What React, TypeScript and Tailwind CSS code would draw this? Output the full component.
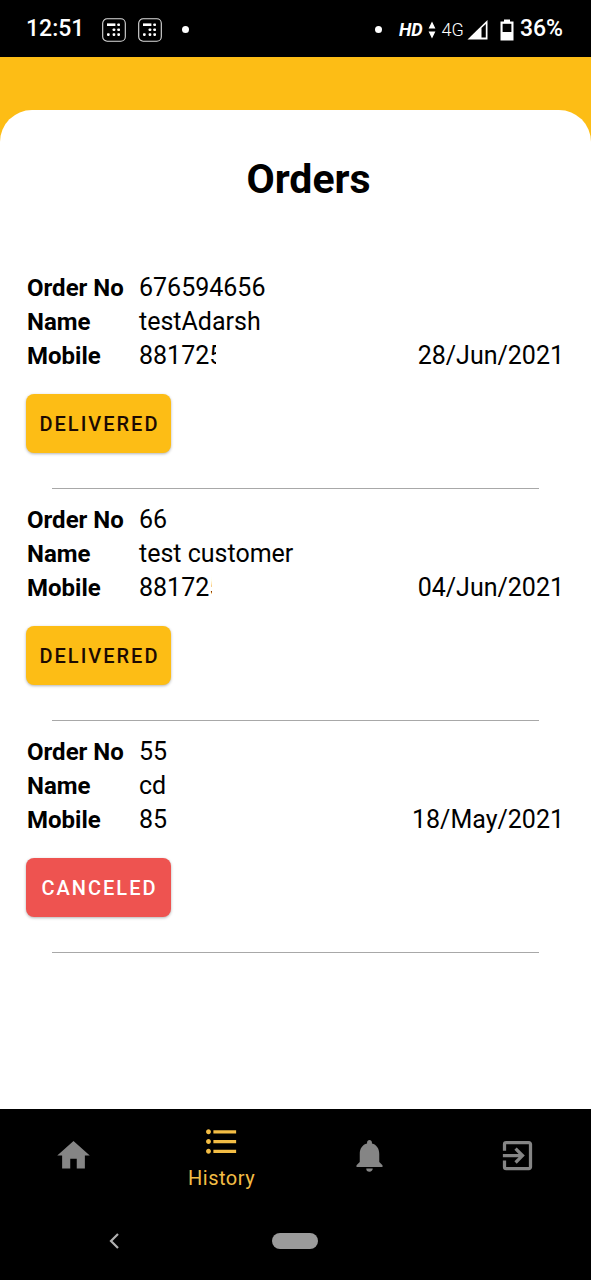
import React from "react";
import { MdExitToApp, MdFormatListBulleted, MdHome, MdNotifications } from "react-icons/md";

type Status = "Delivered" | "Canceled";

interface Order {
  no: string;
  name: string;
  mobile: string;
  mobileWidth: string;
  date: string;
  status: Status;
}

const orders: Order[] = [
  { no: "676594656", name: "testAdarsh", mobile: "881725", mobileWidth: "w-[77px]", date: "28/Jun/2021", status: "Delivered" },
  { no: "66", name: "test customer", mobile: "881725", mobileWidth: "w-[73px]", date: "04/Jun/2021", status: "Delivered" },
  { no: "55", name: "cd", mobile: "85", mobileWidth: "w-auto", date: "18/May/2021", status: "Canceled" },
];

const statusStyle: Record<Status, string> = {
  Delivered: "bg-[#fdbd15] text-[#1c0a02]",
  Canceled: "bg-[#ee5350] text-white",
};

function AppBadge() {
  return (
    <svg viewBox="0 0 24 24" className="size-6" fill="none" aria-hidden="true">
      <rect x="0.7" y="0.7" width="22.6" height="22.6" rx="4.5" stroke="#ddd" strokeWidth="1.1" />
      <g fill="#fff">
        <rect x="5" y="5.4" width="8.4" height="2.6" />
        <rect x="15.3" y="5.4" width="2.7" height="2.7" rx="0.8" />
        <rect x="10.6" y="10.4" width="2.7" height="2.7" rx="0.8" />
        <rect x="15.3" y="10.4" width="2.7" height="2.7" rx="0.8" />
        <rect x="5" y="15.2" width="2.7" height="2.7" rx="0.8" />
        <rect x="10.6" y="15.2" width="2.7" height="2.7" rx="0.8" />
        <rect x="15.3" y="15.2" width="2.7" height="2.7" rx="0.8" />
      </g>
    </svg>
  );
}

function StatusBar() {
  return (
    <div className="flex h-[57px] items-center justify-between bg-black pl-[26px] pr-7 pt-[2px] text-[23px] text-white">
      <div className="flex items-center">
        <span className="font-medium">12:51</span>
        <span className="ml-[18px] flex gap-3">
          <AppBadge />
          <AppBadge />
        </span>
        <span className="ml-5 size-[7px] rounded-full bg-white" />
      </div>
      <div className="flex items-center">
        <span className="mr-[17px] size-[7px] rounded-full bg-white" />
        <span className="text-lg font-bold italic">HD</span>
        <svg viewBox="0 0 8 18" className="ml-[5px] h-[18px] w-2" fill="#fff" aria-hidden="true">
          <path d="M4 0.5 7.4 7.5H0.6zM4 17.5 0.6 10.5h6.8z" />
        </svg>
        <span className="ml-[6px] text-lg font-light">4G</span>
        <svg viewBox="0 0 21 20" className="ml-[3px] h-5 w-[21px]" aria-hidden="true">
          <path d="M0.5 19.5 20.5 0V19.5z" fill="#fff" />
          <path d="M14.5 8 18.8 4V17.6H14.5z" fill="#000" />
        </svg>
        <svg viewBox="0 0 14 22" className="ml-3 h-[22px] w-[14px]" aria-hidden="true">
          <path d="M4 0.5h6v2h3.5V21.5H0.5V2.5H4z" fill="#fff" />
          <path d="M2.6 4.8h8.8V13H2.6z" fill="#000" />
        </svg>
        <span className="ml-[6px] font-medium">36%</span>
      </div>
    </div>
  );
}

function OrderItem({ order }: { order: Order }) {
  return (
    <li className="px-[26px]">
      <div className="flex items-end justify-between px-px text-[25px] leading-[34px]">
        <dl className="grid grid-cols-[112px_auto]">
          <dt className="text-2xl font-bold leading-[34px]">Order No</dt>
          <dd>{order.no}</dd>
          <dt className="text-2xl font-bold leading-[34px]">Name</dt>
          <dd>{order.name}</dd>
          <dt className="text-2xl font-bold leading-[34px]">Mobile</dt>
          <dd className={`overflow-hidden ${order.mobileWidth}`}>{order.mobile}</dd>
        </dl>
        <time>{order.date}</time>
      </div>
      <button
        type="button"
        className={`mt-[21px] flex h-[59px] w-[145px] items-center justify-center rounded-lg pl-[2px] text-xl font-medium uppercase tracking-widest shadow-[0_1px_3px_rgba(0,0,0,0.3)] ${statusStyle[order.status]}`}
      >
        {order.status}
      </button>
      <hr className="mx-[26px] mb-[14px] mt-[35px] border-t border-[#a8a8a8]" />
    </li>
  );
}

const tabs = [
  { label: "Home", Icon: MdHome, active: false },
  { label: "History", Icon: MdFormatListBulleted, active: true },
  { label: "Notifications", Icon: MdNotifications, active: false },
  { label: "Log out", Icon: MdExitToApp, active: false },
];

export default function App() {
  return (
    <div className="flex min-h-screen flex-col bg-[#fdbd15] font-[Roboto,sans-serif] text-black">
      <StatusBar />
      <main className="mt-[53px] flex-1 rounded-t-[32px] bg-white">
        <h1 className="pb-[67px] pl-[26px] pt-[44px] text-center text-[41px] font-bold leading-[50px]">Orders</h1>
        <ul>
          {orders.map((order) => (
            <OrderItem key={order.no} order={order} />
          ))}
        </ul>
      </main>
      <nav className="grid h-[93px] grid-cols-4 bg-black">
        {tabs.map(({ label, Icon, active }) => (
          <a
            key={label}
            href="#"
            aria-label={label}
            className={`flex flex-col items-center justify-center ${active ? "pt-[6px] text-[#f3bd45]" : "text-[#858585]"}`}
          >
            <Icon className="size-[39px]" />
            {active && <span className="text-xl leading-[34px] tracking-wide">{label}</span>}
          </a>
        ))}
      </nav>
      <div className="grid h-[78px] grid-cols-[227px_135px_1fr] items-center justify-items-center bg-black">
        <button type="button" aria-label="Back">
          <svg viewBox="0 0 10 16" className="h-4 w-[10px]" fill="none" stroke="#b0b0b0" strokeWidth="2.2" aria-hidden="true">
            <path d="M9 1 2 8l7 7" />
          </svg>
        </button>
        <button type="button" aria-label="Home screen" className="h-4 w-[46px] rounded-full bg-[#9b9b9b]" />
      </div>
    </div>
  );
}
